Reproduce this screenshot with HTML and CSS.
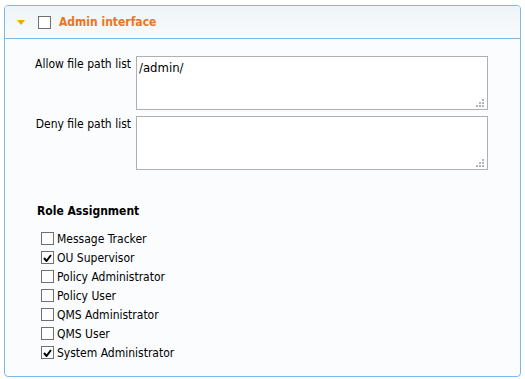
FILE: index.html
```html
<!DOCTYPE html>
<html>
<head>
  <meta charset="UTF-8">
  <title>Admin interface</title>
  <link rel="stylesheet" href="styles.css">
</head>
<body>
  <div class="panel">
    <div class="panel-head">
      <svg class="toggle" width="8" height="5" viewBox="0 0 8 5"><path d="M0 0h8L4 5z" fill="#f5a800"/></svg>
      <span class="box"></span>
      <span class="panel-title">Admin interface</span>
    </div>

    <div class="panel-body">
      <div class="field">
        <label class="field-label">Allow file path list</label>
        <div class="area-wrap">
          <textarea class="area">/admin/</textarea>
          <svg class="grip" width="8" height="8" viewBox="0 0 8 8" fill="#b4b4b4"><rect x="6" y="0" width="2" height="2"/><rect x="3" y="3" width="2" height="2"/><rect x="6" y="3" width="2" height="2"/><rect x="0" y="6" width="2" height="2"/><rect x="3" y="6" width="2" height="2"/><rect x="6" y="6" width="2" height="2"/></svg>
        </div>
      </div>
      <div class="field">
        <label class="field-label">Deny file path list</label>
        <div class="area-wrap">
          <textarea class="area"></textarea>
          <svg class="grip" width="8" height="8" viewBox="0 0 8 8" fill="#b4b4b4"><rect x="6" y="0" width="2" height="2"/><rect x="3" y="3" width="2" height="2"/><rect x="6" y="3" width="2" height="2"/><rect x="0" y="6" width="2" height="2"/><rect x="3" y="6" width="2" height="2"/><rect x="6" y="6" width="2" height="2"/></svg>
        </div>
      </div>

      <h4 class="roles-title">Role Assignment</h4>
      <ul class="roles">
        <li><span class="box"></span>Message Tracker</li>
        <li><span class="box"><svg width="9" height="8" viewBox="0 0 9 8"><path d="M1 4l2.5 3L8 1" stroke="#000" stroke-width="2" fill="none"/></svg></span>OU Supervisor</li>
        <li><span class="box"></span>Policy Administrator</li>
        <li><span class="box"></span>Policy User</li>
        <li><span class="box"></span>QMS Administrator</li>
        <li><span class="box"></span>QMS User</li>
        <li><span class="box"><svg width="9" height="8" viewBox="0 0 9 8"><path d="M1 4l2.5 3L8 1" stroke="#000" stroke-width="2" fill="none"/></svg></span>System Administrator</li>
      </ul>
    </div>
  </div>
</body>
</html>
```

FILE: styles.css
```css
body {
  margin: 0;
  background-color: #fff;
  font-family: "DejaVu Sans Condensed", "DejaVu Sans", sans-serif;
  font-size: 12px;
  color: #000;
}

.panel {
  margin: 5px 4px 0 4px;
  width: 515px;
  height: 370px;
  border: 1px solid #7cb9e8;
  border-radius: 4px;
  background-color: #fafcfd;
  overflow: hidden;
}

.panel-head {
  display: flex;
  align-items: center;
  height: 32px;
  border-bottom: 1px solid #7cb9e8;
  background: linear-gradient(#eff4f7, #f8fbfc);
}

.toggle {
  margin-left: 12px;
  margin-right: 13px;
}

.box {
  display: inline-flex;
  align-items: center;
  justify-content: center;
  width: 11px;
  height: 11px;
  border: 1px solid #707070;
  background-color: #fff;
  flex-shrink: 0;
}

.panel-title {
  margin-left: 8px;
  font-weight: bold;
  font-size: 12px;
  color: #e8761e;
}

.panel-body {
  padding: 17px 0 0 0;
}

.field {
  display: flex;
  align-items: flex-start;
  margin-bottom: 6px;
}

.field-label {
  width: 126px;
  text-align: right;
  padding-top: 1px;
}

.area-wrap {
  position: relative;
  margin-left: 5px;
}

.area {
  display: block;
  box-sizing: border-box;
  width: 352px;
  height: 54px;
  margin: 0;
  padding: 3px 2px;
  border: 1px solid #b0b0b0;
  background-color: #fff;
  font-family: inherit;
  font-size: 13px;
  resize: none;
}

.grip {
  position: absolute;
  right: 4px;
  bottom: 3px;
}

.roles-title {
  margin: 34px 0 0 32px;
  font-size: 12px;
  font-weight: bold;
}

.roles {
  list-style: none;
  margin: 11px 0 0 36px;
  padding: 0;
}

.roles li {
  display: flex;
  align-items: center;
  height: 19px;
}

.roles .box {
  margin-right: 3px;
}
```
